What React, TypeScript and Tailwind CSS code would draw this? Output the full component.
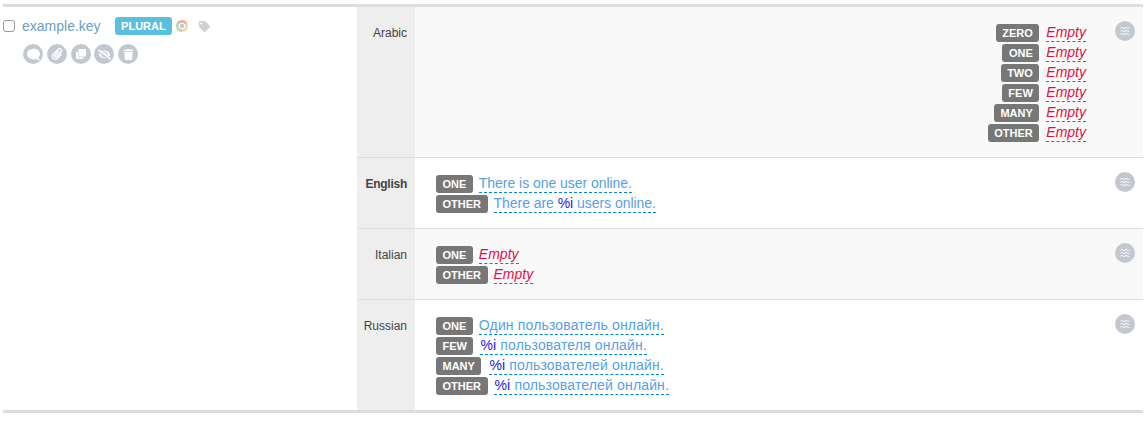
import { FaComment, FaPaperclip, FaClone, FaEyeSlash, FaTrash, FaTag } from 'react-icons/fa'
import type { ReactNode } from 'react'

type Form = { label: string; text?: ReactNode; gap?: string }

const blue = 'text-[#2020e8]'
const cyr = 'tracking-[0.15px]'

const rows: { lang: string; bold?: boolean; tint?: boolean; rtl?: boolean; forms: Form[] }[] = [
  {
    lang: 'Arabic',
    tint: true,
    rtl: true,
    forms: [
      { label: 'ZERO', gap: 'ml-[7px]' },
      { label: 'ONE', gap: 'ml-[7px]' },
      { label: 'TWO', gap: 'ml-[7px]' },
      { label: 'FEW', gap: 'ml-[7px]' },
      { label: 'MANY', gap: 'ml-[7px]' },
      { label: 'OTHER', gap: 'ml-[7px]' },
    ],
  },
  {
    lang: 'English',
    bold: true,
    forms: [
      { label: 'ONE', text: <span className="tracking-[-0.04px]">There is one user online.</span> },
      { label: 'OTHER', text: <span className="tracking-[-0.04px]">There are <span className={blue}>%i</span> users online.</span> },
    ],
  },
  {
    lang: 'Italian',
    tint: true,
    forms: [{ label: 'ONE' }, { label: 'OTHER' }],
  },
  {
    lang: 'Russian',
    forms: [
      { label: 'ONE', text: <span className={cyr}>Один пользователь онлайн.</span> },
      { label: 'FEW', gap: 'ml-[7px]', text: <span className={cyr}><span className={blue}>%i</span> пользователя онлайн.</span> },
      { label: 'MANY', gap: 'ml-[8px]', text: <span className={cyr}><span className={blue}>%i</span> пользователей онлайн.</span> },
      { label: 'OTHER', text: <span className={cyr}><span className={`${blue} ml-px`}>%i</span> пользователей онлайн.</span> },
    ],
  },
]

function RoundIcon({ children }: { children: ReactNode }) {
  return (
    <span className="flex h-5 w-5 shrink-0 items-center justify-center rounded-full bg-[#c3c8d0] text-[11px] text-white">
      {children}
    </span>
  )
}

function ChromeIcon() {
  return (
    <svg width="12" height="12" viewBox="0 0 24 24" className="opacity-50">
      <circle cx="12" cy="12" r="12" fill="#e8b93a" />
      <path d="M12 12 L1.6 6 A12 12 0 0 1 22.4 6 Z" fill="#dc5b4e" />
      <path d="M12 12 L1.6 6 A12 12 0 0 0 12 24 Z" fill="#6db96f" />
      <circle cx="12" cy="12" r="6.5" fill="#fff" />
      <circle cx="12" cy="12" r="4.5" fill="#6a9fd8" />
    </svg>
  )
}

function WavesIcon() {
  return (
    <svg width="10" height="10" viewBox="0 0 10 10" fill="none" stroke="white" strokeWidth="1">
      <path d="M0.5 2 Q1.6 1 2.8 2 T5 2 T7.2 2 T9.5 2" />
      <path d="M0.5 5 Q1.6 4 2.8 5 T5 5 T7.2 5 T9.5 5" />
      <path d="M0.5 8 Q1.6 7 2.8 8 T5 8 T7.2 8 T9.5 8" />
    </svg>
  )
}

function FormLine({ form }: { form: Form }) {
  const gap = form.gap ?? 'ml-[6px]'
  return (
    <div className="flex h-5 items-center">
      <span className="flex h-[18px] items-center rounded-[3px] bg-[#777777] px-[6.5px] text-[11px] font-bold text-white">
        {form.label}
      </span>
      {form.text ? (
        <span className={`${gap} border-b border-dashed border-[#0088cc] text-[14px] leading-[17px] text-[#55a1e5]`}>
          {form.text}
        </span>
      ) : (
        <span className={`${gap} border-b border-dashed border-[#0088cc] text-[14px] leading-[17px] text-[#dd1144] italic`}>
          Empty
        </span>
      )}
    </div>
  )
}

export default function App() {
  return (
    <div className="bg-white pt-1 pr-[3px] pl-[3px] font-['Liberation_Sans',sans-serif]">
      <div className="flex border-y-[3px] border-[#dddddd]">
        <div className="w-[354px] shrink-0 pt-[10px]">
          <div className="flex h-[18px] items-center">
            <input type="checkbox" className="h-3 w-3 appearance-none rounded-[3px] border border-[#999999] bg-white" />
            <span className="ml-[7px] text-[14px] text-[#6c9fbd]">example.key</span>
            <span className="ml-[14px] flex h-[18px] items-center rounded-[3px] bg-[#5bc0de] px-[6.5px] text-[11px] font-bold text-white">
              PLURAL
            </span>
            <span className="ml-1"><ChromeIcon /></span>
            <FaTag className="ml-[11px] text-[11px] text-[#d0d0d0]" />
          </div>
          <div className="mt-[9px] ml-5 flex gap-[3.8px]">
            <RoundIcon><FaComment className="-scale-x-100 text-[13px]" /></RoundIcon>
            <RoundIcon><FaPaperclip className="text-[12px]" /></RoundIcon>
            <RoundIcon><FaClone className="text-[10px]" /></RoundIcon>
            <RoundIcon><FaEyeSlash className="text-[13px]" /></RoundIcon>
            <RoundIcon><FaTrash className="text-[11px]" /></RoundIcon>
          </div>
        </div>
        <div className="min-w-0 flex-1 divide-y divide-[#dddddd]">
          {rows.map((row) => (
            <div key={row.lang} className={`flex ${row.tint ? 'bg-[#f9f9f9]' : 'bg-white'}`}>
              <div className={`w-[58px] shrink-0 bg-[#eeeeee] pt-[17px] pr-2 text-right text-[12px] leading-[18px] text-[#444444] ${row.bold ? 'font-bold tracking-[-0.25px]' : ''}`}>
                {row.lang}
              </div>
              <div className={`flex min-w-0 flex-1 flex-col pt-[16px] pb-[14px] ${row.rtl ? 'items-end' : 'items-start pl-[21px]'}`}>
                {row.forms.map((form) => (
                  <FormLine key={form.label} form={form} />
                ))}
              </div>
              <div className="mt-[14px] mr-2 ml-[29px] shrink-0">
                <RoundIcon><WavesIcon /></RoundIcon>
              </div>
            </div>
          ))}
        </div>
      </div>
    </div>
  )
}
